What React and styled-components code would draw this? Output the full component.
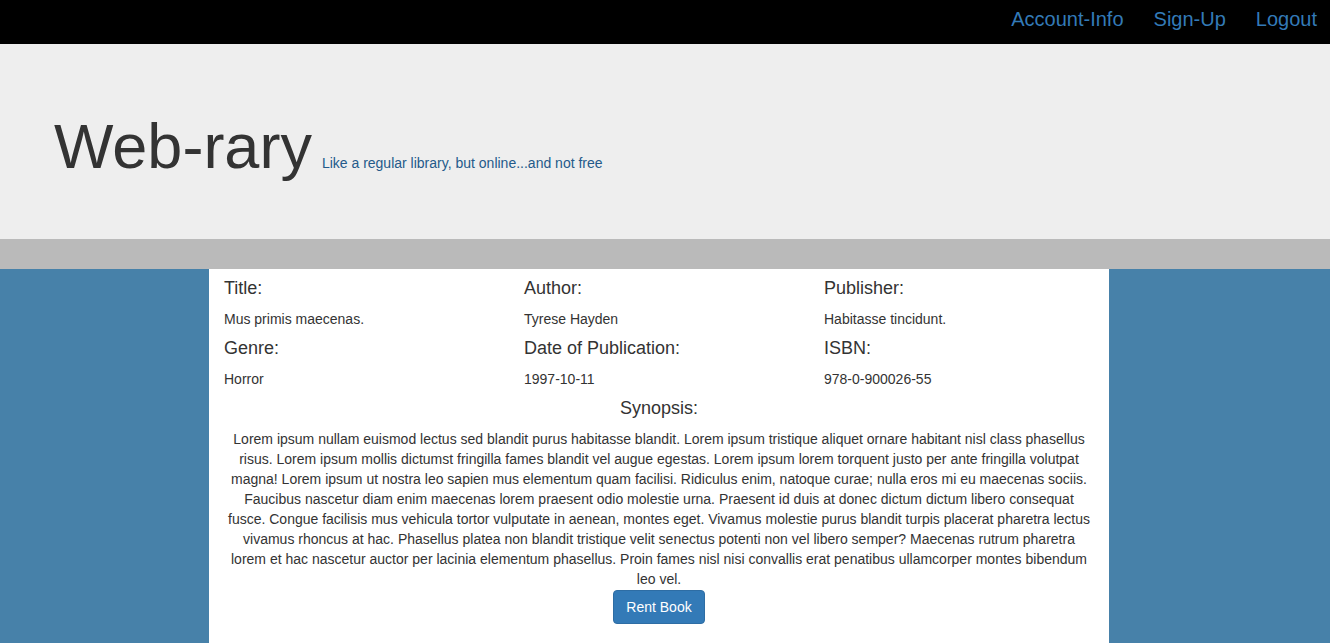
import React from 'react'
import styled, { createGlobalStyle } from 'styled-components'

const GlobalStyle = createGlobalStyle`
  html, body {
    margin: 0;
    padding: 0;
    background: #4781a9;
    font-family: "Liberation Sans", Arial, Helvetica, sans-serif;
    font-size: 14px;
    line-height: 20px;
    color: #333;
  }
  * {
    box-sizing: border-box;
  }
`

const Navbar = styled.nav`
  height: 44px;
  background: #000;
  display: flex;
  justify-content: flex-end;
  align-items: flex-start;
`

const NavLink = styled.a`
  color: #337ab7;
  font-size: 20px;
  line-height: 22px;
  padding: 8px 15px 0 15px;
  text-decoration: none;
  cursor: pointer;
  &:last-child {
    padding-right: 13px;
  }
`

const Jumbotron = styled.header`
  background: #eee;
  padding: 48px 0 48px 54px;
`

const Brand = styled.h1`
  margin: 20px 0 10px;
  font-size: 63px;
  line-height: 1.1;
  font-weight: 400;
  color: #333;
`

const Tagline = styled.small`
  font-size: 14px;
  color: #245a8a;
  margin-left: 10px;
`

const Band = styled.div`
  height: 30px;
  background: #bababa;
`

const Panel = styled.main`
  width: 900px;
  margin-left: 209px;
  background: #fff;
  padding-bottom: 22px;
`

const Row = styled.div`
  display: grid;
  grid-template-columns: repeat(3, 1fr);
`

const Field = styled.div`
  padding: 0 15px;
`

const Label = styled.h4`
  margin: 10px 0;
  font-size: 18px;
  line-height: 1.1;
  font-weight: 400;
  color: #333;
  text-align: ${(p) => (p.$center ? 'center' : 'left')};
`

const Value = styled.p`
  margin: 0;
`

const Synopsis = styled.section`
  padding: 0 15px;
  text-align: center;
`

const SynopsisText = styled.p`
  margin: 0;
`

const RentButton = styled.button`
  display: block;
  margin: 1px auto 0;
  font-family: inherit;
  font-size: 14px;
  line-height: 20px;
  padding: 6px 12px;
  color: #fff;
  background: #337ab7;
  border: 1px solid #2e6da4;
  border-radius: 4px;
  cursor: pointer;
`

const fields = [
  [
    ['Title:', 'Mus primis maecenas.'],
    ['Author:', 'Tyrese Hayden'],
    ['Publisher:', 'Habitasse tincidunt.'],
  ],
  [
    ['Genre:', 'Horror'],
    ['Date of Publication:', '1997-10-11'],
    ['ISBN:', '978-0-900026-55'],
  ],
]

const synopsis =
  'Lorem ipsum nullam euismod lectus sed blandit purus habitasse blandit. Lorem ipsum tristique aliquet ornare habitant nisl class phasellus risus. Lorem ipsum mollis dictumst fringilla fames blandit vel augue egestas. Lorem ipsum lorem torquent justo per ante fringilla volutpat magna! Lorem ipsum ut nostra leo sapien mus elementum quam facilisi. Ridiculus enim, natoque curae; nulla eros mi eu maecenas sociis. Faucibus nascetur diam enim maecenas lorem praesent odio molestie urna. Praesent id duis at donec dictum dictum libero consequat fusce. Congue facilisis mus vehicula tortor vulputate in aenean, montes eget. Vivamus molestie purus blandit turpis placerat pharetra lectus vivamus rhoncus at hac. Phasellus platea non blandit tristique velit senectus potenti non vel libero semper? Maecenas rutrum pharetra lorem et hac nascetur auctor per lacinia elementum phasellus. Proin fames nisl nisi convallis erat penatibus ullamcorper montes bibendum leo vel.'

const App = () => {
  return (
    <>
      <GlobalStyle />
      <Navbar>
        <NavLink>Account-Info</NavLink>
        <NavLink>Sign-Up</NavLink>
        <NavLink>Logout</NavLink>
      </Navbar>
      <Jumbotron>
        <Brand>
          Web-rary<Tagline>Like a regular library, but online...and not free</Tagline>
        </Brand>
      </Jumbotron>
      <Band />
      <Panel>
        {fields.map((row, i) => (
          <Row key={i}>
            {row.map(([label, value]) => (
              <Field key={label}>
                <Label>{label}</Label>
                <Value>{value}</Value>
              </Field>
            ))}
          </Row>
        ))}
        <Synopsis>
          <Label $center>Synopsis:</Label>
          <SynopsisText>{synopsis}</SynopsisText>
          <RentButton>Rent Book</RentButton>
        </Synopsis>
      </Panel>
    </>
  )
}

export default App
